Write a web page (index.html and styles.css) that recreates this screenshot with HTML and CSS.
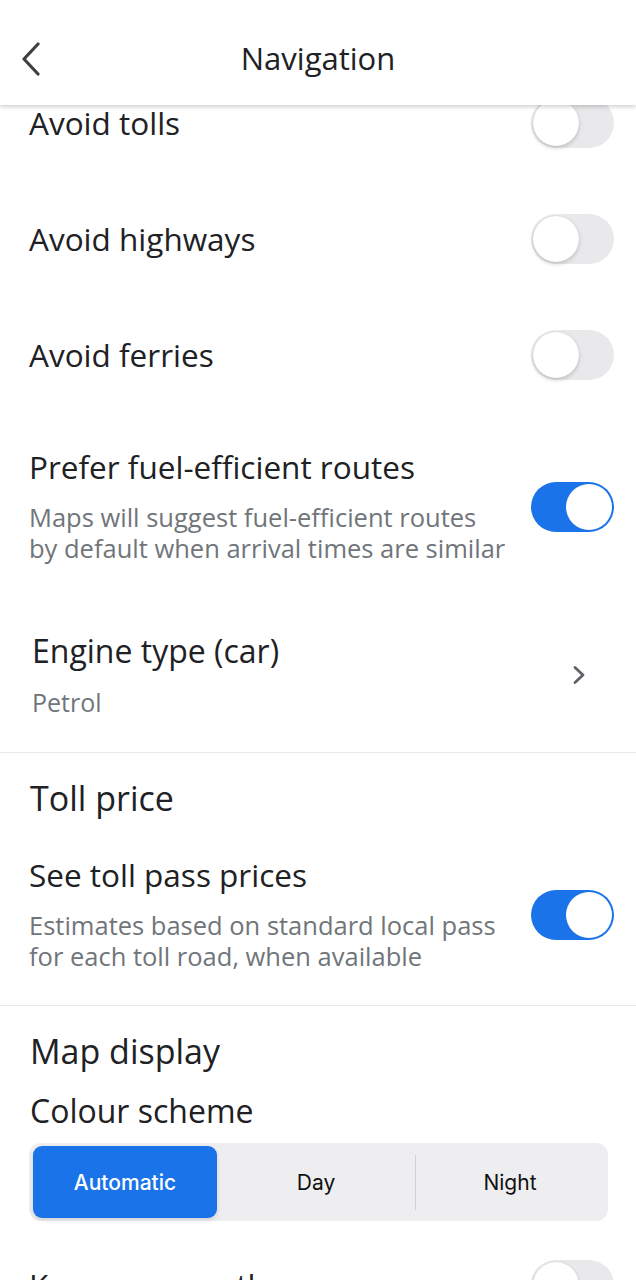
FILE: index.html
```html
<!DOCTYPE html>
<html>
<head>
    <meta charset="UTF-8">
    <meta name="viewport" content="width=device-width, initial-scale=1.0">
    <title>Navigation</title>
    <link rel="stylesheet" href="styles.css">
</head>
<body>
    <div class="topBar">
        <svg class="backIcon" width="24" height="36" viewBox="0 0 24 36">
            <path d="M16 3 L2 18 L16 33" fill="none" stroke="#3c4043" stroke-width="3.2" stroke-linecap="round" stroke-linejoin="round"/>
        </svg>
        <div class="topTitle">Navigation</div>
    </div>

    <div class="page">
        <div class="row toggleRow">
            <div class="rowTitle">Avoid tolls</div>
            <div class="switch"><div class="knob"></div></div>
        </div>
        <div class="row toggleRow">
            <div class="rowTitle">Avoid highways</div>
            <div class="switch"><div class="knob"></div></div>
        </div>
        <div class="row toggleRow">
            <div class="rowTitle">Avoid ferries</div>
            <div class="switch"><div class="knob"></div></div>
        </div>
        <div class="row fuelRow">
            <div class="rowText">
                <div class="rowTitle">Prefer fuel-efficient routes</div>
                <div class="rowSub">Maps will suggest fuel-efficient routes<br>by default when arrival times are similar</div>
            </div>
            <div class="switch on"><div class="knob"></div></div>
        </div>
        <div class="row engineRow">
            <div class="rowText">
                <div class="rowTitle">Engine type (car)</div>
                <div class="rowSub">Petrol</div>
            </div>
            <svg class="moreIcon" width="14" height="20" viewBox="0 0 14 20">
                <path d="M3 2.5 L11 10 L3 17.5" fill="none" stroke="#5f6368" stroke-width="2.8" stroke-linecap="round" stroke-linejoin="round"/>
            </svg>
        </div>

        <div class="section">
            <div class="sectionTitle">Toll price</div>
            <div class="row passRow">
                <div class="rowText">
                    <div class="rowTitle">See toll pass prices</div>
                    <div class="rowSub">Estimates based on standard local pass<br>for each toll road, when available</div>
                </div>
                <div class="switch on"><div class="knob"></div></div>
            </div>
        </div>

        <div class="section mapSection">
            <div class="sectionTitle">Map display</div>
            <div class="subHeading">Colour scheme</div>
            <div class="segmented">
                <div class="segment selected">Automatic</div>
                <div class="segment day">Day</div>
                <div class="segDivider"></div>
                <div class="segment">Night</div>
            </div>
            <div class="row toggleRow">
                <div class="rowTitle">Keep map north up</div>
                <div class="switch"><div class="knob"></div></div>
            </div>
        </div>
    </div>
</body>
</html>
```

FILE: styles.css
```css
body {
    margin: 0;
    height: 1280px;
    overflow: hidden;
    background-color: white;
    font-family: "Open Sans", Roboto, sans-serif;
    color: #202124;
}
.topBar {
    position: absolute;
    top: 0;
    left: 0;
    right: 0;
    height: 105px;
    background: white;
    box-shadow: 0 2px 4px rgba(0, 0, 0, 0.18);
    z-index: 10;
    display: flex;
    align-items: center;
    justify-content: center;
}
.backIcon {
    position: absolute;
    left: 22px;
    top: 41px;
}
.topTitle {
    font-size: 31px;
    margin-top: 10px;
}
.page {
    padding-top: 65px;
}
.row {
    display: flex;
    align-items: center;
    justify-content: space-between;
    padding: 0 22px 0 29px;
}
.toggleRow {
    height: 116px;
}
.rowTitle {
    font-size: 31.5px;
    line-height: 36px;
}
.rowSub {
    font-size: 25.5px;
    line-height: 31px;
    color: #70757a;
    margin-top: 17px;
}
.fuelRow {
    padding-top: 36px;
    padding-bottom: 34px;
}
.engineRow {
    padding: 35px 50px 35px 32px;
    border-bottom: 1px solid #e8eaed;
}
.engineRow .rowTitle {
    font-size: 32px;
}
.engineRow .rowSub {
    font-size: 25px;
    margin-top: 18px;
    line-height: 30px;
}
.switch {
    width: 83px;
    height: 50px;
    border-radius: 25px;
    background-color: #e9e9eb;
    display: flex;
    align-items: center;
    padding: 0 2px;
    box-sizing: border-box;
    flex-shrink: 0;
}
.knob {
    width: 46px;
    height: 46px;
    border-radius: 50%;
    background: white;
    box-shadow: 0 2px 4px rgba(0, 0, 0, 0.18), 0 0 1px rgba(0, 0, 0, 0.12);
}
.switch.on {
    background-color: #1a73e8;
    justify-content: flex-end;
}
.switch.on .knob {
    box-shadow: none;
}
.section {
    padding-top: 25px;
}
.section + .section {
    border-top: 1px solid #e8eaed;
}
.sectionTitle {
    font-size: 34px;
    line-height: 40px;
    padding-left: 30px;
}
.passRow {
    padding-top: 39px;
    padding-bottom: 33px;
}
.subHeading {
    font-size: 32px;
    line-height: 36px;
    padding-left: 30px;
    margin-top: 22px;
}
.segmented {
    margin: 14px 28px 6px 29px;
    height: 78px;
    background-color: #eeeef0;
    border-radius: 12px;
    padding: 3px 4px;
    box-sizing: border-box;
    display: flex;
    align-items: center;
    font-family: Inter, Roboto, sans-serif;
    font-size: 21px;
}
.segment {
    flex: 1;
    height: 100%;
    display: flex;
    align-items: center;
    justify-content: center;
    color: #111;
}
.segment.day {
    flex: 0 0 198px;
}
.segment.selected {
    flex: 0 0 184px;
    background-color: #1a73e8;
    color: white;
    font-weight: 500;
    border-radius: 9px;
    box-shadow: 0 2px 4px rgba(0, 0, 0, 0.12);
}
.segDivider {
    width: 1px;
    height: 55px;
    background-color: #d2d2d6;
}
```
